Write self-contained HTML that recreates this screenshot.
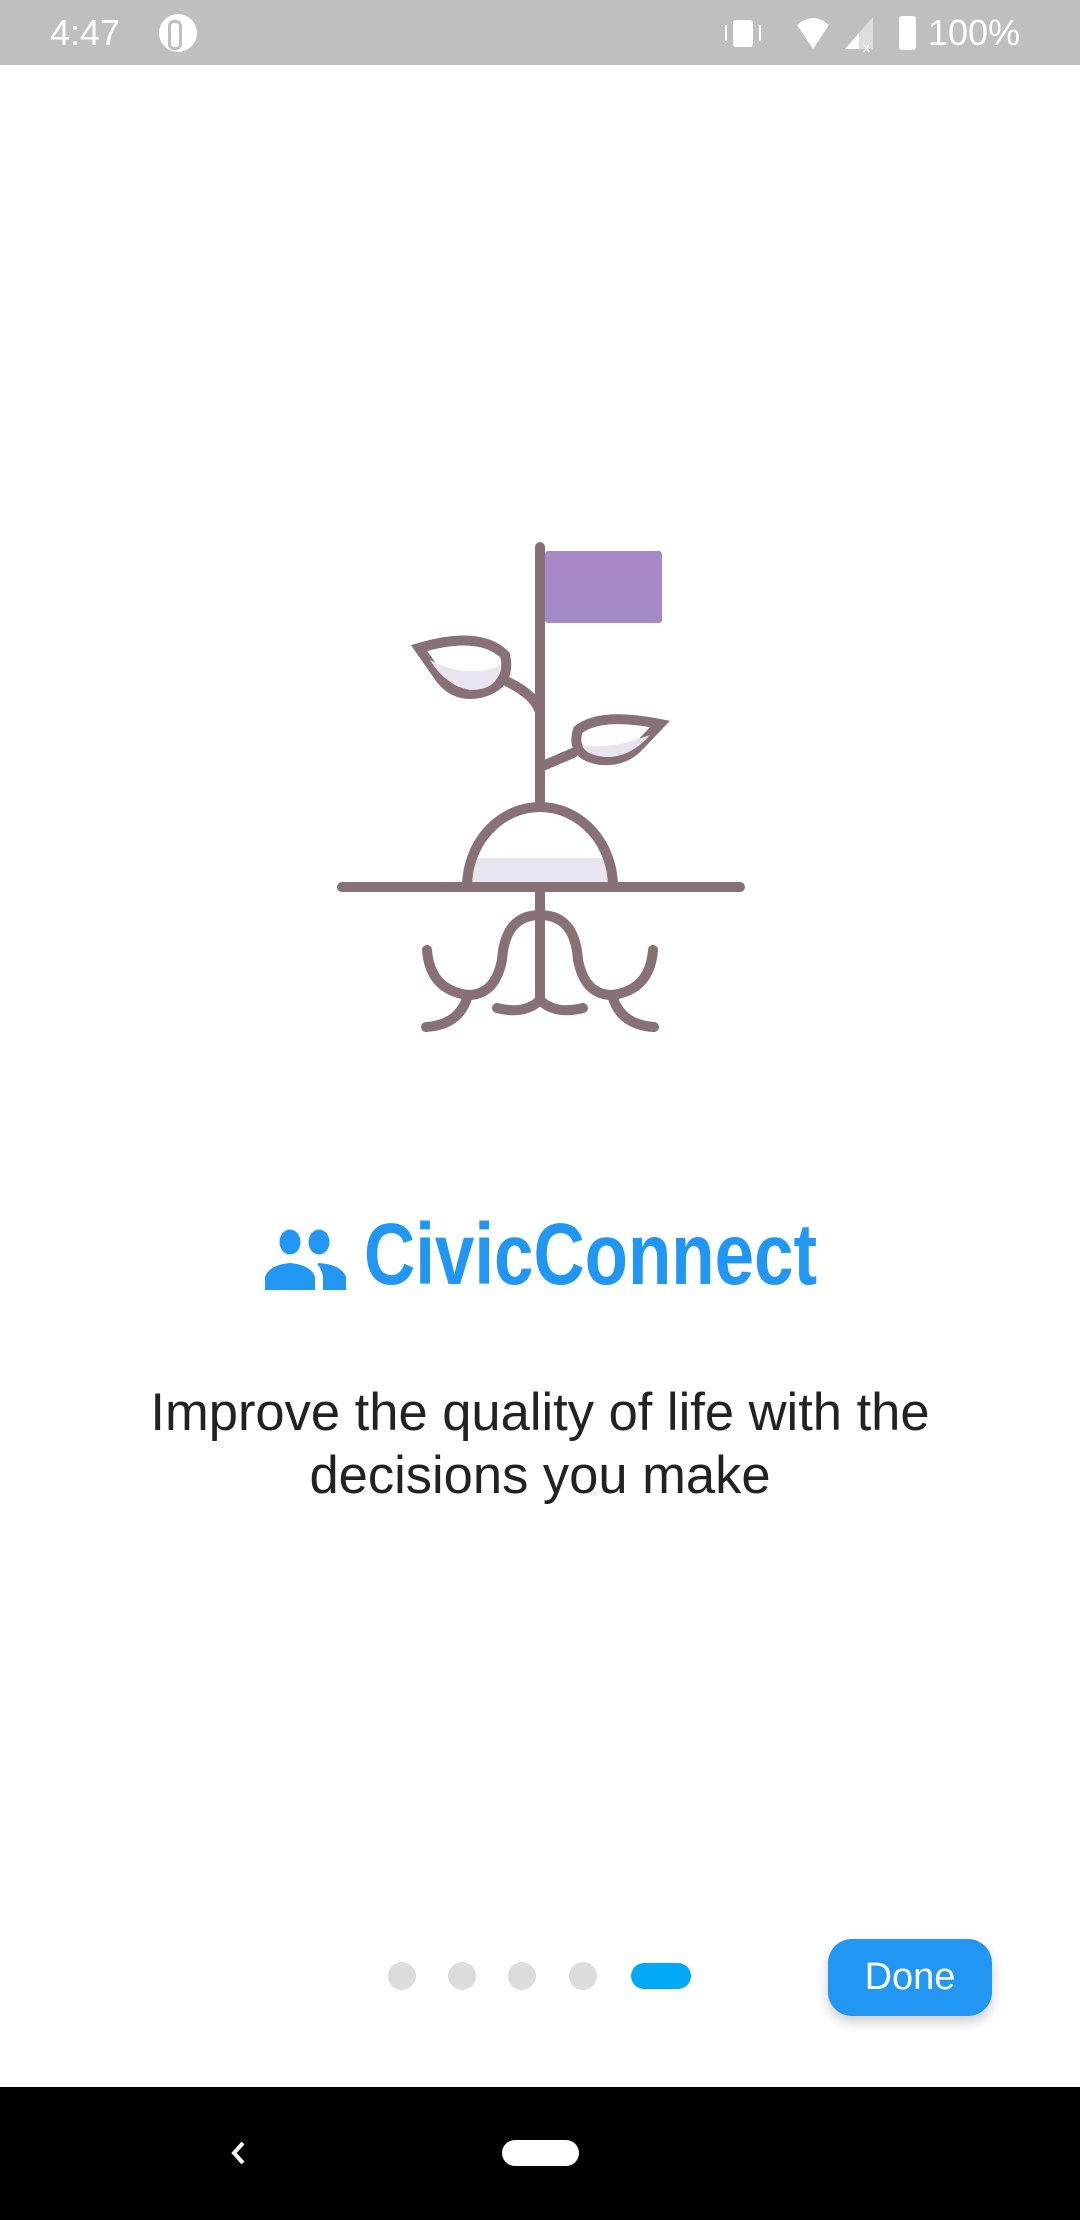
<!DOCTYPE html>
<html><head><style>
body{margin:0;width:1080px;height:2220px;position:relative;background:#fff;font-family:"Liberation Sans",sans-serif;overflow:hidden}
.sb{position:absolute;top:0;left:0;width:1080px;height:65px;background:#bfbfbf;color:#fff}
.a{position:absolute}
</style></head><body>
<div class="sb">
<div class="a" style="left:50px;top:12px;font-size:36px">4:47</div>
<div class="a" style="left:159px;top:14px;width:38px;height:38px;border-radius:50%;background:#fff"></div>
<div class="a" style="left:168px;top:20px;width:8px;height:24px;border:3px solid #bfbfbf;border-radius:6px"></div>
<div class="a" style="left:733px;top:20px;width:20px;height:27px;background:#fff;border-radius:3px"></div>
<div class="a" style="left:725px;top:25px;width:2px;height:16px;background:#fff"></div>
<div class="a" style="left:759px;top:25px;width:2px;height:16px;background:#fff"></div>
<svg class="a" style="left:795px;top:15px" width="90" height="38"><path d="M2 10 Q18 -4 34 10 L18 34 Z" fill="#fff"/><path d="M50 34 L78 2 L78 34 Z" fill="#ddd"/><path d="M50 34 L64 18 L64 34 Z" fill="#fff"/><text x="68" y="37" font-size="14" fill="#fff">x</text></svg>
<div class="a" style="left:899px;top:16px;width:17px;height:34px;background:#fff;border-radius:3px"></div>
<div class="a" style="left:928px;top:12px;font-size:36px">100%</div>
</div>

<svg class="a" style="left:0;top:0" width="1080" height="1100" fill="none" stroke="#877177" stroke-width="10" stroke-linecap="round">
<rect x="545" y="551" width="117" height="72" rx="3" fill="#a68ac8" stroke="none"/>
<rect x="472" y="858" width="136" height="26" fill="#e8e5f0" stroke="none"/>
<path d="M540 547 V805"/>
<path d="M342 887 H740"/>
<path d="M467 887 A73 80 0 0 1 613 887"/>
<path d="M419 648 Q480 630 505 655 Q512 685 480 693 Q455 698 440 678 Z" fill="#fff"/>
<path d="M430 660 Q470 680 500 665 Q500 690 470 690 Q445 685 430 660Z" fill="#e8e5f0" stroke="none"/>
<path d="M508 682 Q535 695 540 712"/>
<path d="M660 724 Q600 712 578 730 Q570 755 600 760 Q625 762 640 745 Z" fill="#fff"/>
<path d="M582 745 Q610 750 650 735 Q630 758 605 757 Q585 755 582 745Z" fill="#e8e5f0" stroke="none"/>
<path d="M545 765 L573 753"/>
<path d="M540 890 V1000"/>
<path d="M540 1000 Q525 1015 497 1008 M540 1000 Q555 1015 583 1008"/>
<path d="M540 915 Q505 915 502 960 Q495 995 468 995 Q430 990 427 950"/>
<path d="M540 915 Q575 915 578 960 Q585 995 612 995 Q650 990 653 950"/>
<path d="M468 995 Q460 1025 426 1027 M612 995 Q620 1025 654 1027"/>
</svg>

<svg class="a" style="left:265px;top:1228px" width="82" height="62" fill="#2196F3"><ellipse cx="25" cy="14" rx="10.5" ry="12.5"/><ellipse cx="54" cy="14" rx="10.5" ry="12.5"/><path d="M0 62 V49 Q4 37 25 35 Q46 37 50 49 V62Z"/><path d="M54 35 Q77 37 81 49 V62 H58 V49 Q57 41 52 36Z"/></svg>
<div class="a" style="left:364px;top:1207px;font-size:87px;line-height:96px;color:#2196F3;font-weight:bold;transform:scaleX(0.815);transform-origin:0 0;white-space:nowrap">CivicConnect</div>

<div class="a" style="left:0;top:1381px;width:1080px;text-align:center;font-size:52.5px;line-height:63px;color:#222">Improve the quality of life with the<br>decisions you make</div>

<div class="a" style="left:388px;top:1962px;width:28px;height:28px;border-radius:50%;background:#dcdcdc"></div>
<div class="a" style="left:448px;top:1962px;width:28px;height:28px;border-radius:50%;background:#dcdcdc"></div>
<div class="a" style="left:508px;top:1962px;width:28px;height:28px;border-radius:50%;background:#dcdcdc"></div>
<div class="a" style="left:569px;top:1962px;width:28px;height:28px;border-radius:50%;background:#dcdcdc"></div>
<div class="a" style="left:631px;top:1963px;width:60px;height:26px;border-radius:13px;background:#03a9f4"></div>
<div class="a" style="left:828px;top:1939px;width:164px;height:77px;border-radius:24px;background:#2196F3;color:#fff;font-size:38px;line-height:77px;text-align:center;box-shadow:0 6px 12px rgba(0,0,0,.2)">Done</div>

<div class="a" style="left:0;top:2087px;width:1080px;height:133px;background:#000"></div>
<svg class="a" style="left:225px;top:2138px" width="30" height="30"><path d="M18 5 L9 15 L18 25" stroke="#fff" stroke-width="4" fill="none"/></svg>
<div class="a" style="left:502px;top:2140px;width:77px;height:26px;border-radius:13px;background:#fff"></div>
</body></html>
